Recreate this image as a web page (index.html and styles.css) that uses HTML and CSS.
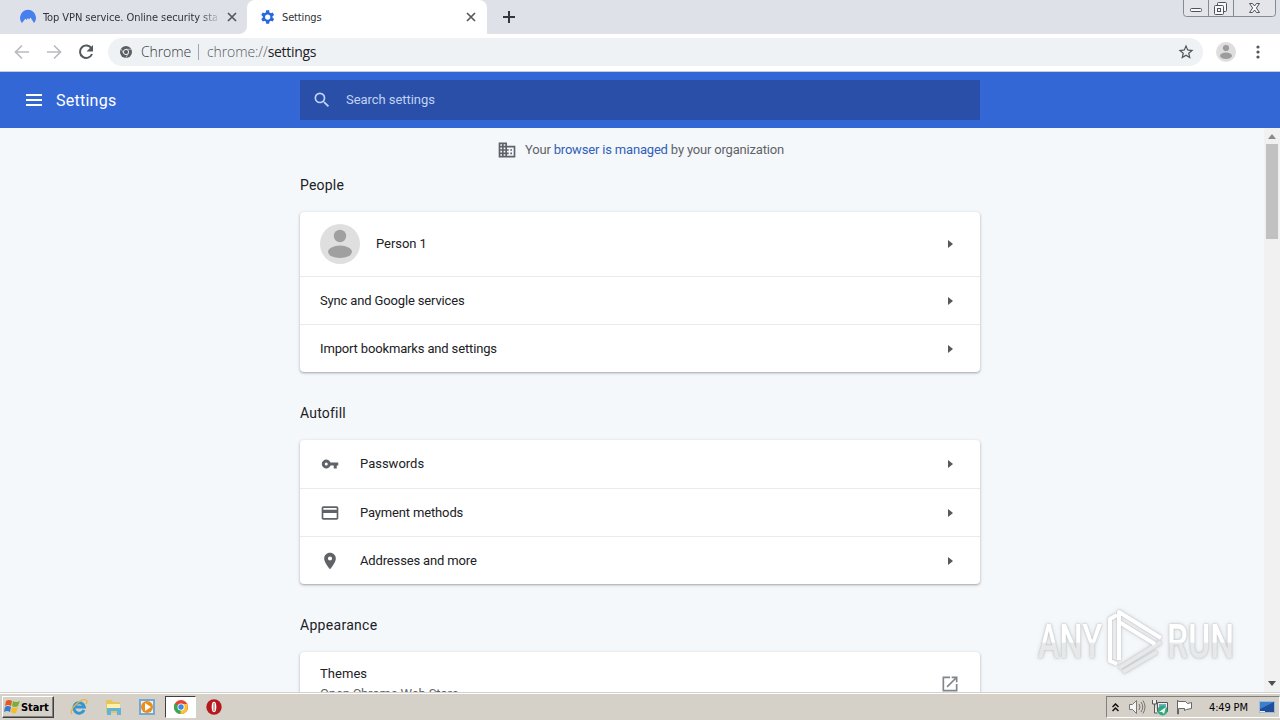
FILE: index.html
```html
<!DOCTYPE html>
<html lang="en">
<head>
<meta charset="utf-8">
<title>Settings</title>
<link rel="stylesheet" href="styles.css">
</head>
<body>
<div class="desktop">
  <header class="tabstrip">
    <div class="tab tab-idle">
      <svg class="favicon" width="16" height="16" viewBox="0 0 16 16"><path fill="#4680ee" d="M2 14A8 8 0 1 1 14 14L10.500 8.500 9 10.500 8 9 6.500 11 5.500 9.500Z"/></svg>
      <span class="tab-title title-fade">Top VPN service. Online security sta</span>
      <svg class="close" width="10" height="10" viewBox="0 0 10 10"><path d="M1 1l8 8M9 1l-8 8"/></svg>
    </div>
    <div class="tab tab-active">
      <svg class="favicon" width="18" height="18" viewBox="0 0 24 24"><path fill="#2568df" d="M19.400 13a7.500 7.500 0 0 0 0-2l2.100-1.650-2-3.460-2.500 1a7.500 7.500 0 0 0-1.700-.98L14.900 3h-4l-.4 2.900a7.500 7.500 0 0 0-1.700.98l-2.500-1-2 3.460L6.400 11a7.500 7.500 0 0 0 0 2l-2.100 1.650 2 3.460 2.500-1q.8.600 1.700.98l.4 2.910h4l.4-2.910q.9-.38 1.700-.98l2.500 1 2-3.460zM12.900 15.500a3.500 3.500 0 1 1 0-7 3.500 3.500 0 0 1 0 7"/></svg>
      <span class="tab-title">Settings</span>
      <svg class="close" width="10" height="10" viewBox="0 0 10 10"><path d="M1 1l8 8M9 1l-8 8"/></svg>
    </div>
    <svg class="newtab" width="12" height="12" viewBox="0 0 12 12"><path d="M6 0v12M0 6h12"/></svg>
    <svg class="winbtns" width="94" height="18" viewBox="0 0 94 18"><path fill="#e4e5e8" stroke="#858b96" d="M.5-1V13.500q0 3 3 3H89.500q3 0 3-3V-1M25.500 0V16M50.500 0V16"/><g fill="#f7f7f7" stroke="#4d535e"><rect x="7.500" y="8.500" width="11" height="3" rx="1"/><rect x="34.500" y="2.500" width="9" height="9" rx="1"/><rect x="31.500" y="5.500" width="9" height="9" rx="1"/><rect x="34.500" y="8.500" width="3" height="3"/><path d="M66.500 3.500h3l2 2.500 2-2.500h3L73.400 8l3.100 4.500h-3l-2-2.500-2 2.500h-3L69.600 8z"/></g></svg>
  </header>
  <nav class="toolbar">
    <svg class="nav" width="16" height="16" viewBox="0 0 16 16"><path stroke="#b9bbbe" d="M15 8H2M8 1.500L1.500 8 8 14.500"/></svg>
    <svg class="nav" width="16" height="16" viewBox="0 0 16 16"><path stroke="#b9bbbe" d="M1 8h13M8 1.500L14.500 8 8 14.500"/></svg>
    <svg class="nav" width="16" height="16" viewBox="0 0 16 16"><path stroke="#55585c" stroke-width="2" d="M13.500 4.500A6.200 6.200 0 1 0 14 10"/><path fill="#55585c" d="M15 1v6.500H8.500z"/></svg>
    <div class="omnibox">
      <svg width="12" height="12" viewBox="0 0 24 24"><circle cx="12" cy="12" r="12" fill="#5b5e62"/><circle cx="12" cy="12" r="5.200" fill="#5b5e62" stroke="#eef1f4" stroke-width="2"/><path stroke="#eef1f4" stroke-width="1.200" d="M12 6.500h11M7.200 14.800L1.700 5.500M16.700 14.800L11.500 24"/></svg>
      <span class="origin">Chrome</span><i class="sep"></i><span class="url">chrome://<b>settings</b></span>
      <svg class="star" width="18" height="18" viewBox="0 0 24 24"><path fill="#4f5357" d="M22 9.240l-7.190-.62L12 2 9.190 8.630 2 9.240l5.460 4.730L5.820 21 12 17.270 18.180 21l-1.630-7.030zM12 15.400l-3.760 2.270 1-4.280-3.320-2.880 4.380-.38L12 6.100l1.710 4.040 4.380.38-3.320 2.880 1 4.280z"/></svg>
    </div>
    <svg class="avatar-sm" width="20" height="20" viewBox="0 0 40 40"><circle cx="20" cy="20" r="20" fill="#dedede"/><circle cx="20" cy="12" r="6.200" fill="#9c9c9c"/><ellipse cx="20" cy="27.500" rx="12" ry="6.500" fill="#9c9c9c"/></svg>
    <svg class="dots" width="4" height="14" viewBox="0 0 4 14"><g fill="#55585c"><circle cx="2" cy="2" r="1.600"/><circle cx="2" cy="7" r="1.600"/><circle cx="2" cy="12" r="1.600"/></g></svg>
  </nav>
  <div class="appbar">
    <svg class="menu" width="16" height="12" viewBox="0 0 16 12"><path fill="#fff" d="M0 0h16v2H0zM0 5h16v2H0zM0 10h16v2H0z"/></svg>
    <h1>Settings</h1>
    <div class="search">
      <svg width="20" height="20" viewBox="0 0 24 24"><path fill="#c3d3f3" d="M15.500 14h-.79l-.28-.27A6.470 6.470 0 0 0 16 9.500 6.500 6.500 0 1 0 9.500 16c1.610 0 3.090-.59 4.230-1.570l.27.28v.79l5 4.990L20.490 19zm-6 0C7.010 14 5 11.990 5 9.500S7.010 5 9.500 5 14 7.010 14 9.500 11.990 14 9.500 14"/></svg>
      <span>Search settings</span>
    </div>
  </div>
  <main class="viewport">
    <div class="content">
      <p class="managed">
        <svg width="20" height="20" viewBox="0 0 24 24"><path fill="#5f6368" d="M12 7V3H2v18h20V7zM6 19H4v-2h2zm0-4H4v-2h2zm0-4H4V9h2zm0-4H4V5h2zm4 12H8v-2h2zm0-4H8v-2h2zm0-4H8V9h2zm0-4H8V5h2zm10 12h-8v-2h2v-2h-2v-2h2v-2h-2V9h8zm-2-8h-2v2h2zm0 4h-2v2h2z"/></svg>
        <span>Your <a>browser is managed</a> by your organization</span>
      </p>
      <h2>People</h2>
      <section class="card">
        <div class="row person"><svg width="40" height="40" viewBox="0 0 40 40"><circle cx="20" cy="20" r="20" fill="#dfdfdf"/><circle cx="20" cy="12" r="6.200" fill="#a0a0a0"/><ellipse cx="20" cy="27.800" rx="12" ry="6.200" fill="#a0a0a0"/></svg><span>Person 1</span><i class="arrow"></i></div>
        <div class="row"><span>Sync and Google services</span><i class="arrow"></i></div>
        <div class="row last"><span>Import bookmarks and settings</span><i class="arrow"></i></div>
      </section>
      <h2>Autofill</h2>
      <section class="card">
        <div class="row tall"><svg class="ricon" width="18" height="18" viewBox="0 0 24 24"><path d="M12.650 10A6 6 0 1 0 12.650 14H17v4h4v-4h2v-4zM7 14a2 2 0 1 1 0-4 2 2 0 0 1 0 4"/></svg><span class="snug">Passwords</span><i class="arrow"></i></div>
        <div class="row"><svg class="ricon" width="20" height="20" viewBox="0 0 24 24"><path d="M20 4H4c-1.110 0-2 .89-2 2v12c0 1.110.89 2 2 2h16c1.110 0 2-.89 2-2V6c0-1.110-.89-2-2-2m0 14H4v-6h16zm0-10H4V6h16z"/></svg><span>Payment methods</span><i class="arrow"></i></div>
        <div class="row last"><svg class="ricon" width="20" height="20" viewBox="0 0 24 24"><path d="M12 2C8.130 2 5 5.130 5 9c0 5.250 7 13 7 13s7-7.750 7-13c0-3.870-3.130-7-7-7m0 9.500a2.500 2.500 0 1 1 0-5 2.500 2.500 0 0 1 0 5"/></svg><span>Addresses and more</span><i class="arrow"></i></div>
      </section>
      <h2 class="wide">Appearance</h2>
      <section class="card">
        <div class="row themes"><div><span>Themes</span><small>Open Chrome Web Store</small></div><svg class="launch" width="20" height="20" viewBox="0 0 24 24"><path fill="#80868b" d="M19 19H5V5h7V3H3v18h18v-9h-2zM14 3v2h3.590l-9.830 9.830 1.410 1.410L19 6.410V10h2V3z"/></svg></div>
      </section>
    </div>
    <div class="scrollbar"><i class="up"></i><i class="thumb"></i><i class="down"></i></div>
    <svg class="watermark" width="208" height="70" viewBox="0 0 208 70">
      <defs><linearGradient id="fade" x1="0" y1="0" x2="0" y2="1"><stop offset=".5" stop-color="#fff"/><stop offset=".54" stop-color="#e6e8e9"/></linearGradient></defs>
      <g fill="url(#fade)"><text x="3" y="52" textLength="64" lengthAdjust="spacingAndGlyphs">ANY</text><text x="132" y="52" textLength="67" lengthAdjust="spacingAndGlyphs">RUN</text></g>
      <g fill="none" stroke="#fff" stroke-width="4" stroke-linejoin="round"><path stroke="#e6e8e9" d="M126 36L84 62M122 46L88 66"/><path d="M82 58L75 55V13L82 9"/><path d="M84 54V6L126 32M84 16L120 38"/></g>
    </svg>
  </main>
  <footer class="taskbar">
    <div class="start"><svg width="18" height="18" viewBox="0 0 18 18"><path fill="#e8561f" d="M3 3q3-2 6 0L8 8Q5 6 2 8z"/><path fill="#7cae35" d="M10 3q3 2 7 0l-2 5q-3 2-6 0z"/><path fill="#377cc9" d="M2 9q3-2 6 0l-1 5q-3-2-6 0z"/><path fill="#f5bd27" d="M9 9q3 2 6 0l-2 6q-3 1-5-1z"/></svg><span>Start</span></div>
    <svg class="ie" width="18" height="18" viewBox="0 0 18 18"><path fill="none" stroke="#3595d2" stroke-width="3" d="M14 12A5.300 5.300 0 1 1 14.300 9H5"/><path fill="none" stroke="#e6b63c" stroke-width="1.300" d="M2 16C-2 12 11 0 16 2q2 1 0 4"/></svg>
    <svg class="folder" width="18" height="18" viewBox="0 0 18 18"><path fill="#e7c55d" d="M2 2h6l1 2h7v11H2z"/><path fill="#fff0ad" d="M3 6h13v4H3z"/><path fill="#60b3d9" d="M3 10h14v7h-4v-4H7v4H3z"/></svg>
    <svg class="player" width="18" height="18" viewBox="0 0 18 18"><path fill="#72a9d5" d="M1 1h16v16H1z"/><path fill="#e9f3fa" d="M3 3h12v12H3z"/><circle cx="9" cy="9" r="6" fill="#ef8b18"/><path fill="#fff" d="M7 5l6 4-6 4z"/></svg>
    <div class="pressed"><svg width="14" height="14" viewBox="0 0 24 24"><circle cx="12" cy="12" r="12" fill="#e64535"/><path fill="#36a852" d="M12 12L1.600 6A12 12 0 0 0 12 24l6-9z"/><path fill="#f9c42f" d="M12 12l-1 12A12 12 0 0 0 22.400 7H12z"/><circle cx="12" cy="12" r="6" fill="#fff"/><circle cx="12" cy="12" r="4.600" fill="#4285e8"/></svg></div>
    <svg class="opera" width="16" height="16" viewBox="0 0 16 16"><circle cx="8" cy="8" r="7.700" fill="#b7181e"/><ellipse cx="8" cy="8" rx="2.300" ry="5.200" fill="#fff"/><path stroke="#a01a1e" stroke-width=".8" d="M8 4v8"/></svg>
    <div class="tray">
      <svg class="chev" width="7" height="9" viewBox="0 0 7 9"><path fill="none" stroke="#111" stroke-width="1.500" d="M.5 4L3.500 1l3 3M.5 8L3.500 5l3 3"/></svg>
      <svg class="snd" width="18" height="16" viewBox="0 0 18 16"><path fill="#f5f5f5" stroke="#777" d="M1.500 5.500h3l4-4v13l-4-4h-3z"/><path fill="none" stroke="#777" d="M11 5q2 3 0 6M13 3q3.500 5 0 10M15 1.500q4 6.500 0 13"/></svg>
      <svg class="net" width="17" height="17" viewBox="0 0 17 17"><path fill="#eee" stroke="#555" d="M5.500 3.500h10v9h-10z"/><path fill="#6faecb" d="M7 5h7v6H7z"/><path fill="#eee" stroke="#555" d="M.5 1v4h4V1M2.500 5v9h3"/><circle cx="10.500" cy="11.500" r="5" fill="#36a77a"/><path fill="#e5f4f6" d="M7 13l7-5-2 7-2-2z"/></svg>
      <svg class="flag" width="17" height="16" viewBox="0 0 17 16"><path fill="#fff" stroke="#666" d="M1.500 1v14h1V9.500h6v2l2-1 5-1v-6l-4 1-2-2h-7z"/></svg>
      <time>4:49 PM</time>
      <svg class="show" width="16" height="14" viewBox="0 0 16 14"><path fill="#1f4e9a" stroke="#a3bbd7" d="M.5 1.500h15v11H.5z"/><path fill="#3c80cd" d="M1 2h14L1 9z"/><path fill="#e8eef5" d="M1 11h5v1H1z"/></svg>
    </div>
  </footer>
</div>
</body>
</html>
```
FILE: styles.css
```css
* { box-sizing: border-box; }
body { margin: 0; font-family: Roboto, "Liberation Sans", sans-serif; }
svg { display: block; flex: none; }
.desktop { width: 1280px; height: 720px; display: flex; flex-direction: column; overflow: hidden; }

.tabstrip { height: 34px; flex: none; display: flex; background: linear-gradient(90deg, #fff 0 0) 239px 100% / 16px 8px no-repeat, #dee1e7; }
.tab { height: 34px; display: flex; align-items: center; font: 11px/34px "DejaVu Sans Condensed", "DejaVu Sans", sans-serif; color: #303337; }
.tab-idle { width: 247px; padding: 0 10px 0 20px; border-bottom-right-radius: 8px; background: #dee1e7; }
.tab-active { width: 240px; padding: 0 11px; background: #fff; border-radius: 8px 8px 0 0; }
.tab-title { margin: 1px 0 0 6px; flex: 1; white-space: nowrap; letter-spacing: -.15px; }
.tab-idle .tab-title { flex: none; width: 174px; margin-left: 7px; letter-spacing: -.07px; }
.title-fade { mask-image: linear-gradient(90deg, #000 90%, rgba(0,0,0,.2)); }
.close { fill: none; stroke: #55585c; stroke-width: 1.7; }
.tab-idle .close { margin-left: 10px; }
.newtab { margin: 11px 0 0 16px; stroke: #33363a; stroke-width: 2; }
.winbtns { margin-left: auto; margin-right: 3px; }

.toolbar { height: 38px; flex: none; display: flex; align-items: center; padding: 0 20px 2px 14px; background: #fff; border-bottom: 1px solid #c6cedd; }
.nav { margin-right: 16px; fill: none; stroke-width: 1.7; }
.omnibox { width: 1095px; height: 28px; margin-left: -2px; display: flex; align-items: center; padding: 0 8px 0 12px; border-radius: 14px; background: #eff2f5; font: 300 14px/28px "Open Sans", "Noto Sans", sans-serif; color: #35383c; letter-spacing: -.1px; }
.origin { margin-left: 9px; width: 50px; }
.sep { width: 1px; height: 16px; margin: 0 8px 0 7px; background: #a4a7ab; }
.url { color: #585c61; }
.url b { font-weight: 400; color: #202124; letter-spacing: -.3px; }
.star { margin-left: auto; }
.avatar-sm { margin-left: 13px; }
.dots { margin-left: auto; }

.appbar { height: 56px; flex: none; display: flex; align-items: center; padding-left: 26px; background: #3367d6; color: #fff; }
.appbar h1 { width: 244px; margin: 0 0 0 14px; font-size: 16px; font-weight: 400; letter-spacing: .25px; }
.search { width: 680px; height: 40px; display: flex; align-items: center; padding-left: 12px; background: #294fa8; color: #c1d2f4; font-size: 13px; letter-spacing: -.05px; }
.search span { margin: 0 0 2px 14px; }

.viewport { position: relative; flex: 1; min-height: 0; display: flex; justify-content: space-between; overflow: hidden; background: #f5f8fb; }
.content { width: 680px; margin-left: 300px; }
.managed { height: 44px; margin: 0; display: flex; align-items: center; justify-content: center; gap: 8px; padding-left: 1px; color: #5f6368; font-size: 13px; letter-spacing: -.18px; }
.managed span { margin-bottom: 2px; }
.managed a { color: #3060b8; }
h2 { height: 20px; margin: 3px 0 17px; font-size: 14px; line-height: 20px; font-weight: 400; color: #202124; letter-spacing: .2px; }
h2.wide { letter-spacing: .3px; }
.card { margin-bottom: 31px; background: #fff; border-radius: 4px; box-shadow: 0 1px 2px rgba(60,64,67,.35), 0 1px 3px 1px rgba(60,64,67,.1); color: #202124; font-size: 13px; }
.row { height: 48px; display: flex; align-items: center; padding: 0 27px 0 20px; border-bottom: 1px solid #e9eaeb; letter-spacing: -.15px; }
.row.last { height: 47px; padding-top: 1px; border-bottom: 0; }
.row > span { margin-bottom: 1px; }
.row.last > span { margin-bottom: 2px; }
.row > .snug { letter-spacing: 0; margin-bottom: 2px; }
.tall { height: 49px; }
.person { height: 65px; }
.person > span { margin: 0 0 2px 16px; letter-spacing: -.05px; }
.arrow { margin-left: auto; border-left: 5px solid #55585c; border-top: 4px solid transparent; border-bottom: 4px solid transparent; }
.ricon { margin-right: 20px; fill: #5f6368; }
.tall .ricon { margin: 0 21px 0 1px; }
.row.themes { height: 64px; padding-right: 20px; }
.themes span, .themes small { display: block; line-height: 20px; font-size: 13px; }
.themes span { letter-spacing: .05px; }
.themes small { color: #5f6368; }
.launch { margin-left: auto; }

.scrollbar { width: 16px; display: flex; flex-direction: column; align-items: center; background: #f1f1f1; }
.up { margin-top: 6px; border: 4px solid transparent; border-top: 0; border-bottom: 5px solid #8b8b8b; }
.thumb { width: 12px; height: 95px; margin-top: 5px; background: #c1c1c1; }
.down { margin: auto 0 6px; border: 4px solid transparent; border-bottom: 0; border-top: 5px solid #505050; }
.watermark { position: absolute; left: 1035px; top: 478px; filter: drop-shadow(0 0 1px #b4b8bb) drop-shadow(0 0 2px #dde0e2); font: 500 48px Roboto, sans-serif; }

.taskbar { height: 28px; flex: none; display: flex; align-items: center; padding: 1px 0 0 2px; background: #d5d0c8; border-top: 1px solid #d5d0c8; box-shadow: inset 0 1px #fff; font-family: "DejaVu Sans Condensed", "DejaVu Sans", sans-serif; font-size: 11px; color: #000; }
.start { width: 52px; height: 22px; display: flex; align-items: center; border: 1px solid; border-color: #fff #404040 #404040 #fff; box-shadow: inset -1px -1px #808080; font-weight: bold; }
.start span { letter-spacing: -.1px; }
.ie { margin-left: 16px; }
.folder { margin-left: 16px; }
.player { margin-left: 16px; }
.pressed { width: 31px; height: 22px; margin-left: 9px; display: flex; align-items: center; justify-content: center; background: #fff; border: 1px solid; border-color: #404040 #fff #fff #404040; }
.opera { margin-left: 10px; }
.tray { width: 174px; height: 22px; margin-left: auto; display: flex; align-items: center; padding-left: 5px; border: 1px solid; border-color: #808080 #fff #fff #808080; }
.snd { margin-left: 9px; }
.net { margin-left: 6px; }
.flag { margin-left: 7px; }
.tray time { width: 41px; margin-left: 16px; white-space: nowrap; letter-spacing: -.15px; }
.show { margin-left: 9px; }
```
